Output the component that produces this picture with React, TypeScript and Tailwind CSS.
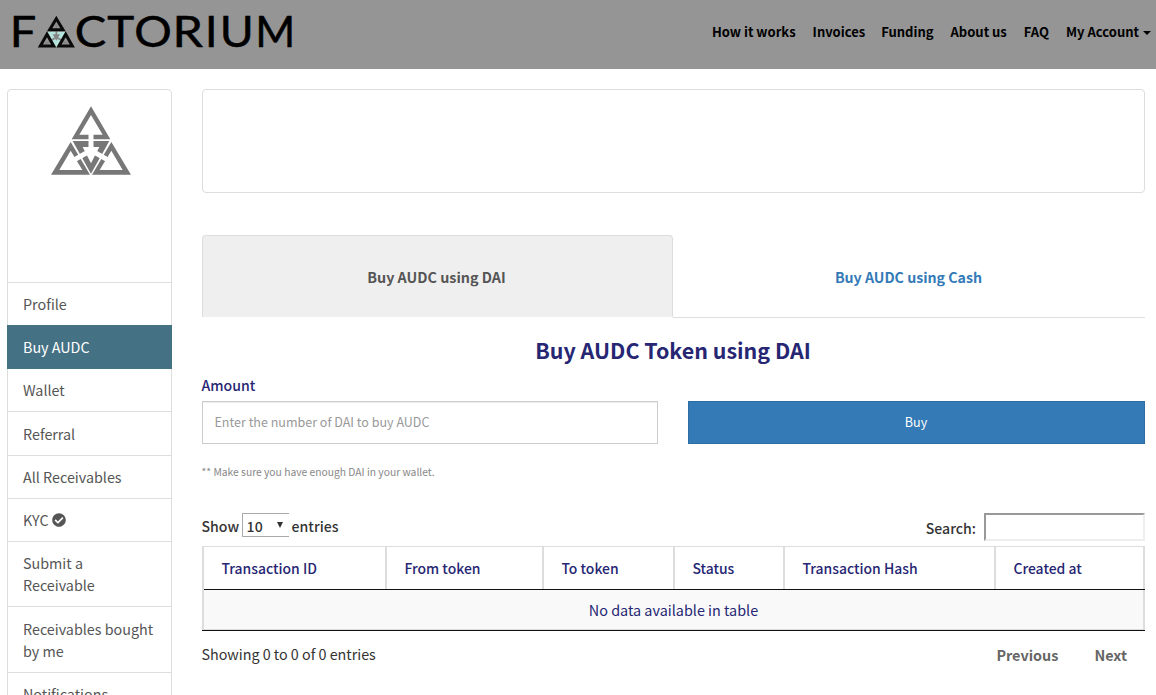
import { FaCheckCircle } from "react-icons/fa";

const letters = [
  { ch: "F", x: 9.8, w: 26.5 },
  { ch: "C", x: 74.8, w: 31.5 },
  { ch: "T", x: 107.2, w: 27 },
  { ch: "O", x: 134.2, w: 37.6 },
  { ch: "R", x: 172.4, w: 30.5 },
  { ch: "I", x: 205.1, w: 12.5 },
  { ch: "U", x: 219.8, w: 34 },
  { ch: "M", x: 255.2, w: 40 },
];

function Logo() {
  return (
    <svg width="310" height="69" viewBox="0 0 310 69" className="block shrink-0" aria-label="Factorium">
      <g fontFamily="Lato, sans-serif" fontWeight="400" fontSize="42" fill="#000" stroke="#000" strokeWidth="0.5">
        {letters.map((l) => (
          <text key={l.ch} x={l.x} y="46.8" textLength={l.w} lengthAdjust="spacingAndGlyphs">
            {l.ch}
          </text>
        ))}
      </g>
      <g transform="translate(34 12) scale(0.33333)">
        <path d="M40 59H95L67 106Z" fill="#b4e4dc" />
        <g stroke="#858585" strokeWidth="5" fill="#858585">
          <path d="M67 36V76L34 95M67 76L100 95" fill="none" />
          <path d="M56 67H78L67 86Z" stroke="none" />
        </g>
        <g fill="none" stroke="#0a0a0a" strokeWidth="9">
          <path d="M67 20L87 53H47Z" />
          <path d="M39 67L59 102H19Z" />
          <path d="M95 67L115 102H75Z" />
        </g>
      </g>
    </svg>
  );
}

function Emblem() {
  return (
    <svg width="86" height="78" viewBox="0 0 258 234" className="block" aria-hidden="true">
      <g fill="#777" fillRule="evenodd">
        <path d="M129 13L187 112H71ZM129 39L94 98H164Z" />
        <path d="M68 120L126 218H9ZM68 146L34 204H103Z" />
        <path d="M190 120L249 218H132ZM190 146L155 204H224Z" />
        <path d="M74 117H184L129 215Z" />
      </g>
      <path d="M129 88V145L80 173M129 145L178 173" fill="none" stroke="#fff" strokeWidth="15" />
      <path d="M104 135H154L129 184Z" fill="#fff" />
    </svg>
  );
}

const nav = [
  { label: "How it works", mr: "mr-[17px]" },
  { label: "Invoices", mr: "mr-[16px]" },
  { label: "Funding", mr: "mr-[17px]" },
  { label: "About us", mr: "mr-[17px]" },
  { label: "FAQ", mr: "mr-[17px]" },
];

const menu = [
  { label: "Profile", h: "h-[43px]" },
  { label: "Buy AUDC", h: "h-[44px]", active: true },
  { label: "Wallet", h: "h-[42px]", first: true },
  { label: "Referral", h: "h-[44px]" },
  { label: "All Receivables", h: "h-[43px]" },
  { label: "KYC", h: "h-[43px]", verified: true },
  { label: "Submit a Receivable", h: "h-[65px]" },
  { label: "Receivables bought by me", h: "h-[66px]" },
  { label: "Notifications", h: "h-[43px]" },
];

const columns = ["Transaction ID", "From token", "To token", "Status", "Transaction Hash", "Created at"];

export default function App() {
  return (
    <div className="h-[695px] w-[1156px] overflow-hidden bg-white font-['Noto_Sans_CJK_SC',sans-serif] text-[14.33px] text-[#333]">
      <header className="flex h-[69px] items-start justify-between bg-[#959595]">
        <Logo />
        <nav className="flex h-[64px] items-center pr-[5px] text-[13px] leading-5 font-bold whitespace-nowrap text-black">
          {nav.map((n) => (
            <a key={n.label} className={n.mr}>
              {n.label}
            </a>
          ))}
          <a className="flex items-center gap-1">
            My Account
            <svg width="8" height="4" viewBox="0 0 8 4" className="mt-[2px]">
              <path d="M0 0H8L4 4Z" />
            </svg>
          </a>
        </nav>
      </header>

      <div className="flex items-start pt-5 pl-[7px]">
        <aside className="w-[165px] shrink-0 rounded-t border border-[#ddd] text-[#555]">
          <div className="flex h-[192px] pt-3 pl-10">
            <Emblem />
          </div>
          <ul>
            {menu.map((m) => (
              <li
                key={m.label}
                className={
                  m.active
                    ? `${m.h} relative -mx-px flex items-center bg-[#447184] pl-4 leading-[22px] text-white`
                    : `${m.h} flex items-center pr-4 pl-[15px] leading-[22px] ${m.first ? "" : "border-t border-[#ddd]"}`
                }
              >
                {m.label}
                {m.verified && <FaCheckCircle className="ml-[3px] size-[14px]" />}
              </li>
            ))}
          </ul>
        </aside>

        <main className="ml-[30px] w-[943px]">
          <section className="h-[104px] rounded border border-[#ddd]" />

          <div className="mt-[42px] flex h-[83px] text-center leading-[22px] font-bold">
            <div className="flex h-[82px] w-[471px] items-center justify-center rounded-t border border-b-0 border-[#ddd] bg-[#efefef] pt-px pr-[2px] text-[#555]">
              Buy AUDC using DAI
            </div>
            <div className="flex flex-1 items-center justify-center border-b border-[#ddd] pt-px pr-px text-[14.2px] text-[#337ab7]">
              Buy AUDC using Cash
            </div>
          </div>

          <h1 className="mt-[18px] pr-px text-center text-[21.45px] leading-7 font-bold text-[#262673]">Buy AUDC Token using DAI</h1>

          <label className="-ml-[0.5px] mt-[10px] block text-[14.1px] leading-[22px] font-medium text-[#262673]">Amount</label>
          <div className="mt-[5px] grid grid-cols-[456px_457px] gap-[30px]">
            <input
              className="h-[43px] border border-[#ccc] px-[11.5px] pb-[2px] text-[12.52px] shadow-[inset_0_1px_1px_rgba(0,0,0,0.075)] outline-none placeholder:text-[#999]"
              placeholder="Enter the number of DAI to buy AUDC"
            />
            <button className="h-[43px] border border-[#2e6da4] bg-[#337ab7] pr-px text-[12.52px] text-white">Buy</button>
          </div>
          <p className="-ml-[0.5px] mt-[18px] text-[10.3px] leading-5 text-[#888]">** Make sure you have enough DAI in your wallet.</p>

          <div className="mt-[31px] flex h-[33px] items-start justify-between text-[14.1px] leading-[22px] font-medium">
            <div className="-ml-[0.5px] flex h-6 items-center">
              <span className="pt-px">Show</span>
              <span className="mr-[3px] ml-[2.5px] flex h-6 w-[47px] items-center justify-between rounded-l-[1px] border border-r-0 border-[#a9a9a9] pt-px pr-[6px] pl-1">
                10
                <svg width="6" height="6" viewBox="0 0 6 6" className="-mt-[2px]">
                  <path d="M0 0H6L3 6Z" fill="#333" />
                </svg>
              </span>
              <span className="pt-px">entries</span>
            </div>
            <label className="flex h-7 items-center">
              <span className="pt-px">Search:</span>
              <input className="ml-2 h-7 w-[161px] border-2 border-t-[#999] border-r-[#eee] border-b-[#eee] border-l-[#999] outline-none" />
            </label>
          </div>

          <div className="border-l-2 border-[#ddd] text-[#262673]">
            <div className="grid h-[44px] grid-cols-[183px_157px_131px_110px_211px_149px] border-t border-b border-t-[#ddd] border-b-[#111] text-[13.95px] font-medium">
              {columns.map((c) => (
                <div key={c} className="flex items-center border-r-2 border-[#ddd] pt-px pl-[17.4px]">
                  {c}
                </div>
              ))}
            </div>
            <div className="flex h-[40px] items-center justify-center border-r-2 border-b border-[#ddd] bg-[#f9f9f9] text-[14.4px]">
              No data available in table
            </div>
          </div>
          <div className="h-px bg-[#111]" />

          <div className="mt-[12px] flex items-start justify-between leading-[22px]">
            <div className="-ml-[0.5px] text-[14.3px]">Showing 0 to 0 of 0 entries</div>
            <div className="mt-px flex gap-9 pr-[18px] text-[14.4px] font-bold text-[#666]">
              <span>Previous</span>
              <span>Next</span>
            </div>
          </div>
        </main>
      </div>
    </div>
  );
}
